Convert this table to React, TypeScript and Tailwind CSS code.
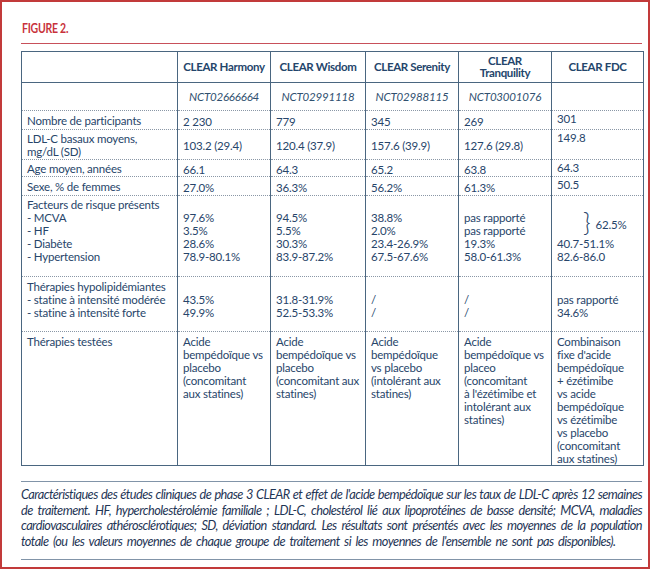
import React from 'react';

type Study = { name: React.ReactNode; nct: string };

const studies: Study[] = [
  { name: 'CLEAR Harmony', nct: 'NCT02666664' },
  { name: 'CLEAR Wisdom', nct: 'NCT02991118' },
  { name: 'CLEAR Serenity', nct: 'NCT02988115' },
  { name: <>CLEAR<br />Tranquility</>, nct: 'NCT03001076' },
  { name: 'CLEAR FDC', nct: '' },
];

// simple rows: label + 5 values
const simpleRows = [
  { h: 'h-[19px]', label: 'Nombre de participants', values: ['2 230', '779', '345', '269', '301'] },
  { h: 'h-[30px]', label: <>LDL-C basaux moyens,<br />mg/dL (SD)</>, values: ['103.2 (29.4)', '120.4 (37.9)', '157.6 (39.9)', '127.6 (29.8)', '149.8'] },
  { h: 'h-[17px]', label: 'Age moyen, années', values: ['66.1', '64.3', '65.2', '63.8', '64.3'] },
  { h: 'h-[19px]', label: 'Sexe, % de femmes', values: ['27.0%', '36.3%', '56.2%', '61.3%', '50.5'] },
];

const risk = [
  ['97.6%', '3.5%', '28.6%', '78.9-80.1%'],
  ['94.5%', '5.5%', '30.3%', '83.9-87.2%'],
  ['38.8%', '2.0%', '23.4-26.9%', '67.5-67.6%'],
  ['pas rapporté', 'pas rapporté', '19.3%', '58.0-61.3%'],
];

const lipid = [
  ['43.5%', '49.9%'],
  ['31.8-31.9%', '52.5-53.3%'],
  ['/', '/'],
  ['/', '/'],
  ['pas rapporté', '34.6%'],
];

const tested = [
  <>Acide<br />bempédoïque vs<br />placebo<br />(concomitant<br />aux statines)</>,
  <>Acide<br />bempédoïque vs<br />placebo<br />(concomitant aux<br />statines)</>,
  <>Acide<br />bempédoïque<br />vs placebo<br />(intolérant aux<br />statines)</>,
  <>Acide<br />bempédoïque vs<br />placeo<br />(concomitant<br />à l'ézétimibe et<br />intolérant aux<br />statines)</>,
  <>Combinaison<br />fixe d'acide<br />bempédoïque<br />+ ézétimibe<br />vs acide<br />bempédoïque<br />vs ézétimibe<br />vs placebo<br />(concomitant<br />aux statines)</>,
];

const cell = 'border-x border-[#4a6680] px-[5px] py-0 whitespace-nowrap overflow-visible';
const dotted = 'border-b border-dotted border-b-[#8a97a6]';

export default function App() {
  return (
    <div
      className="w-[650px] h-[569px] overflow-hidden border-2 border-[#c23a3a] bg-white pl-[19px] pr-[5px] pt-[19px]"
      style={{ fontFamily: 'Lato, "Open Sans", sans-serif' }}
    >
      {/* Title */}
      <div className="text-[12.5px] leading-[16px] font-bold tracking-[-0.3px] text-[#c8323c] pl-[1px]">
        <span className="inline-block origin-left scale-x-[0.84]">FIGURE 2.</span>
      </div>
      <div className="mt-[6px] mr-[1px] h-px bg-[#c8505a]" />

      {/* Table */}
      <table className="mt-[7px] w-[622px] table-fixed border-collapse border border-[#4a6680] text-[11.5px] leading-[13px] tracking-[-0.2px] text-[#27456a]">
        <colgroup>
          <col className="w-[156px]" />
          <col className="w-[93px]" />
          <col className="w-[95px]" />
          <col className="w-[93px]" />
          <col className="w-[93px]" />
          <col className="w-[92px]" />
        </colgroup>
        <thead>
          <tr className="h-[31px] border-b border-[#4a6680]">
            <th className={cell} />
            {studies.map((s, i) => (
              <th key={i} className={`${cell} px-[2px] text-center align-middle font-bold text-[#24456b] leading-[12px] tracking-[-0.35px]`}>
                {s.name}
              </th>
            ))}
          </tr>
        </thead>
        <tbody>
          <tr className={`h-[28px] ${dotted}`}>
            <td className={cell} />
            {studies.map((s, i) => (
              <td key={i} className={`${cell} text-center align-middle italic text-[#30506f]`}>{s.nct}</td>
            ))}
          </tr>

          {simpleRows.map((r, ri) => (
            <tr key={ri} className={`${r.h} ${dotted}`}>
              <td className={`${cell} align-middle`}>{r.label}</td>
              {r.values.map((v, i) => (
                <td key={i} className={`${cell} ${i === 4 ? 'align-top pt-[1px]' : 'align-middle pt-[2px]'}`}>{v}</td>
              ))}
            </tr>
          ))}

          {/* Facteurs de risque */}
          <tr className={`h-[81px] ${dotted}`}>
            <td className={`${cell} align-top pt-[2px]`}>
              Facteurs de risque présents<br />- MCVA<br />- HF<br />- Diabète<br />- Hypertension
            </td>
            {risk.map((vals, i) => (
              <td key={i} className={`${cell} align-top pt-[15px]`}>
                {vals.map((v, j) => <div key={j}>{v}</div>)}
              </td>
            ))}
            <td className={`${cell} align-top pt-[15px]`}>
              <div className="flex h-[26px] items-center pl-[26px] gap-[5px]">
                <span className="text-[26px] leading-none font-light -mt-[4px]">&#125;</span>
                <span>62.5%</span>
              </div>
              <div>40.7-51.1%</div>
              <div>82.6-86.0</div>
            </td>
          </tr>

          {/* Thérapies hypolipidémiantes */}
          <tr className={`h-[55px] ${dotted}`}>
            <td className={`${cell} align-top pt-[3px]`}>
              Thérapies hypolipidémiantes<br />- statine à intensité modérée<br />- statine à intensité forte
            </td>
            {lipid.map((vals, i) => (
              <td key={i} className={`${cell} align-top pt-[16px]`}>
                {vals.map((v, j) => <div key={j}>{v}</div>)}
              </td>
            ))}
          </tr>

          {/* Thérapies testées */}
          <tr className="h-[134px]">
            <td className={`${cell} align-top pt-[3px]`}>Thérapies testées</td>
            {tested.map((t, i) => (
              <td key={i} className={`${cell} align-top pt-[3px]`}>{t}</td>
            ))}
          </tr>
        </tbody>
      </table>

      {/* Caption */}
      <div className="mt-[15px] w-[621px] border-y border-[#8194a8] pt-[5px] pb-[9px] text-[12.75px] leading-[15.7px] italic tracking-[-0.55px] [word-spacing:-0.5px] text-[#1f3656]">
        <div className="whitespace-nowrap [text-align-last:justify]">
          Caractéristiques des études cliniques de phase 3 CLEAR et effet de l'acide bempédoïque sur les taux de LDL-C après 12 semaines
        </div>
        <div className="whitespace-nowrap [text-align-last:justify]">
          de traitement. HF, hypercholestérolémie familiale ; LDL-C, cholestérol lié aux lipoprotéines de basse densité; MCVA, maladies
        </div>
        <div className="whitespace-nowrap [text-align-last:justify]">
          cardiovasculaires athérosclérotiques; SD, déviation standard. Les résultats sont présentés avec les moyennes de la population
        </div>
        <div className="whitespace-nowrap [word-spacing:2px]">
          totale (ou les valeurs moyennes de chaque groupe de traitement si les moyennes de l'ensemble ne sont pas disponibles).
        </div>
      </div>
    </div>
  );
}
